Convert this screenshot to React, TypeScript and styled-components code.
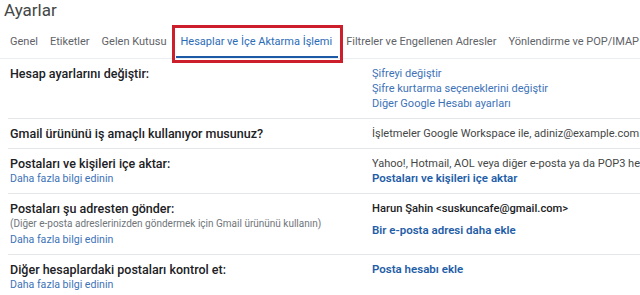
import styled, { createGlobalStyle } from "styled-components";

const GlobalStyle = createGlobalStyle`
    body{
        margin: 0;
        background: #ffffff;
        font-family: Roboto, "Liberation Sans", Arial, sans-serif;
        overflow: hidden;
    }
`;

const Page = styled.div`
    width: 640px;
    height: 295px;
    overflow: hidden;
    background: #fff;
`;
const Title = styled.h1`
    margin: 0;
    padding-left: 4px;
    height: 22px;
    line-height: 20px;
    font-size: 17px;
    font-weight: 400;
    color: #444746;
`;
const Tabs = styled.div`
    display: flex;
    margin-top: 4px;
    padding-left: 4px;
    border-bottom: 1px solid #eceff1;
    white-space: nowrap;
`;
const Tab = styled.div<{ $active?: boolean }>`
    position: relative;
    height: 32px;
    line-height: 32px;
    padding: 0 6px;
    font-size: 11px;
    color: ${p => p.$active ? "#2b6cb8" : "#5f6368"};
    ${p => p.$active && `
        margin: 0 2px 0 4px;
        padding: 0 6px 0 4px;
        &::before{
            content: "";
            position: absolute;
            left: 0;
            right: 0;
            bottom: 0;
            height: 2px;
            background: #1d5aa5;
        }
        &::after{
            content: "";
            position: absolute;
            left: -4px;
            right: -5px;
            top: -1px;
            bottom: -5px;
            border: 3px solid #cc1f2b;
        }
    `}
`;
const Rows = styled.div`
    margin-left: 8px;
`;
const Row = styled.div`
    display: grid;
    grid-template-columns: 362px 1fr;
    padding: 7px 0 7px 2px;
    border-top: 1px solid #e4e6e8;
    &:first-child{
        border-top: none;
    }
`;
const Cell = styled.div`
    display: flex;
    flex-direction: column;
    line-height: 15px;
    white-space: nowrap;
    overflow: hidden;
`;
const Label = styled.span`
    font-size: 12.5px;
    font-weight: 500;
    color: #202124;
`;
const Note = styled.span`
    font-size: 10px;
    color: #70757a;
    line-height: 16px;
`;
const Link = styled.a<{ $bold?: boolean; $gap?: number; $small?: boolean }>`
    font-size: ${p => p.$bold ? "11.5px" : p.$small ? "10.6px" : "11px"};
    font-weight: ${p => p.$bold ? 600 : 400};
    color: ${p => p.$bold ? "#1f5ea8" : "#3d72b8"};
    text-decoration: none;
    margin-top: ${p => p.$gap ?? 0}px;
    cursor: pointer;
`;
const Text = styled.span`
    font-size: 11px;
    color: #444746;
`;
const Strong = styled.span`
    font-size: 11.2px;
    font-weight: 500;
    color: #202124;
`;

const tabs = [
    "Genel",
    "Etiketler",
    "Gelen Kutusu",
    "Hesaplar ve İçe Aktarma İşlemi",
    "Filtreler ve Engellenen Adresler",
    "Yönlendirme ve POP/IMAP",
];

export default function App(){
    return(
        <Page>
            <GlobalStyle/>
            <Title>Ayarlar</Title>
            <Tabs>
                {tabs.map((t, i) => <Tab key={t} $active={i === 3}>{t}</Tab>)}
            </Tabs>
            <Rows>
                <Row>
                    <Cell><Label>Hesap ayarlarını değiştir:</Label></Cell>
                    <Cell>
                        <Link>Şifreyi değiştir</Link>
                        <Link>Şifre kurtarma seçeneklerini değiştir</Link>
                        <Link>Diğer Google Hesabı ayarları</Link>
                    </Cell>
                </Row>
                <Row>
                    <Cell><Label>Gmail ürününü iş amaçlı kullanıyor musunuz?</Label></Cell>
                    <Cell><Text>İşletmeler Google Workspace ile, adiniz@example.com e-posta adresi alabilir.</Text></Cell>
                </Row>
                <Row>
                    <Cell>
                        <Label>Postaları ve kişileri içe aktar:</Label>
                        <Link $small>Daha fazla bilgi edinin</Link>
                    </Cell>
                    <Cell>
                        <Text>Yahoo!, Hotmail, AOL veya diğer e-posta ya da POP3 hesaplarından içe aktarın.</Text>
                        <Link $bold>Postaları ve kişileri içe aktar</Link>
                    </Cell>
                </Row>
                <Row>
                    <Cell>
                        <Label>Postaları şu adresten gönder:</Label>
                        <Note>(Diğer e-posta adreslerinizden göndermek için Gmail ürününü kullanın)</Note>
                        <Link $small>Daha fazla bilgi edinin</Link>
                    </Cell>
                    <Cell>
                        <Strong>Harun Şahin &lt;suskuncafe@gmail.com&gt;</Strong>
                        <Link $bold $gap={7}>Bir e-posta adresi daha ekle</Link>
                    </Cell>
                </Row>
                <Row>
                    <Cell>
                        <Label>Diğer hesaplardaki postaları kontrol et:</Label>
                        <Link $small>Daha fazla bilgi edinin</Link>
                    </Cell>
                    <Cell>
                        <Link $bold>Posta hesabı ekle</Link>
                    </Cell>
                </Row>
            </Rows>
        </Page>
    );
}
